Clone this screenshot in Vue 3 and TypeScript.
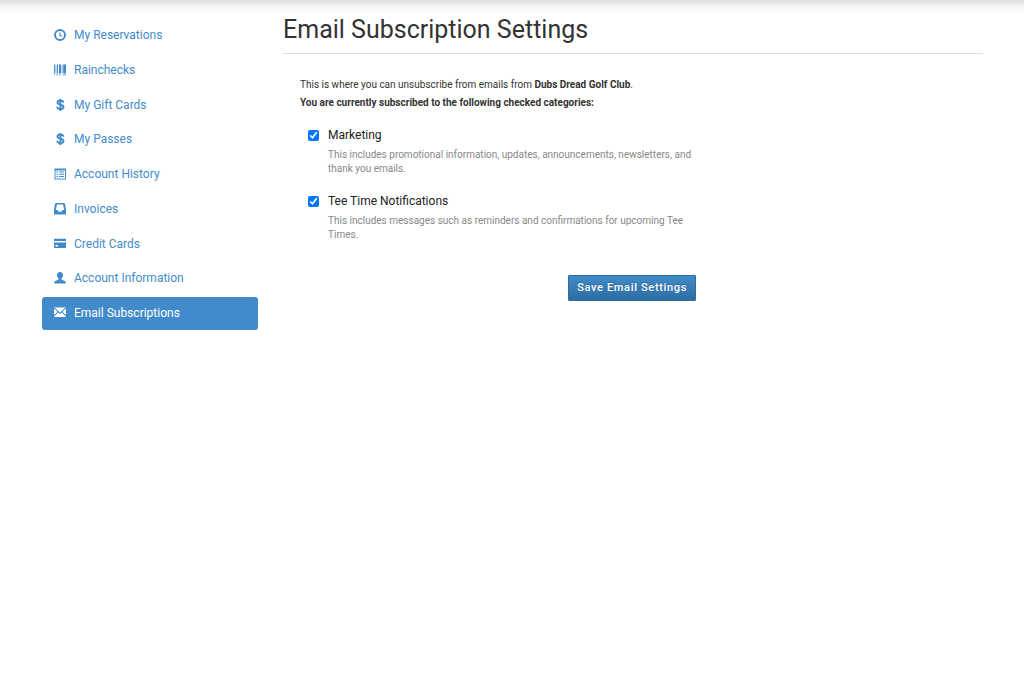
<script setup lang="ts">
import { ref } from 'vue'

type IconName = 'time' | 'barcode' | 'usd' | 'list' | 'inbox' | 'card' | 'user' | 'envelope'

interface NavItem {
  label: string
  icon: IconName
}

interface Category {
  id: string
  label: string
  description: string
  checked: boolean
}

const navItems: NavItem[] = [
  { label: 'My Reservations', icon: 'time' },
  { label: 'Rainchecks', icon: 'barcode' },
  { label: 'My Gift Cards', icon: 'usd' },
  { label: 'My Passes', icon: 'usd' },
  { label: 'Account History', icon: 'list' },
  { label: 'Invoices', icon: 'inbox' },
  { label: 'Credit Cards', icon: 'card' },
  { label: 'Account Information', icon: 'user' },
  { label: 'Email Subscriptions', icon: 'envelope' },
]

const active = ref('Email Subscriptions')

const categories = ref<Category[]>([
  {
    id: 'marketing',
    label: 'Marketing',
    description:
      'This includes promotional information, updates, announcements, newsletters, and thank you emails.',
    checked: true,
  },
  {
    id: 'tee-times',
    label: 'Tee Time Notifications',
    description: 'This includes messages such as reminders and confirmations for upcoming Tee Times.',
    checked: true,
  },
])
</script>

<template>
  <div class="page">
    <div class="top-shade"></div>
    <nav class="side" aria-label="Account">
      <ul class="nav-list">
        <li v-for="item in navItems" :key="item.label">
          <a
            href="#"
            class="nav-link"
            :class="{ active: item.label === active }"
            @click.prevent="active = item.label"
          >
            <svg class="icon" viewBox="0 0 12 12" aria-hidden="true">
              <g v-if="item.icon === 'time'" fill="none" stroke="currentColor">
                <circle cx="6" cy="6" r="5" stroke-width="1.9" />
                <path d="M5.9 3.3V6.3L8.1 7.2" stroke-width="1.1" />
              </g>
              <path
                v-else-if="item.icon === 'barcode'"
                d="M0 .5h.9v9H0zM1.6 .5h.7v9h-.7zM3 .5h1v9H3zM5 .5h2v9H5zM7.7 .5h.7v9h-.7zM9.2 .5H12v9H9.2zM0 10.5h1v.7H0zM2 10.5h2v.7H2zM5 10.5h2v.7H5zM9 10.5h3v.7H9z"
              />
              <path
                v-else-if="item.icon === 'usd'"
                d="M9.4 3.7C9.2 2.300 8.100 1.500 6.400 1.500C4.600 1.500 3.500 2.300 3.500 3.600C3.500 5 4.700 5.400 6.400 5.750C8.200 6.100 9.500 6.600 9.500 8.100C9.500 9.400 8.300 10.200 6.400 10.200C4.500 10.200 3.300 9.300 3.200 7.800M6.400 0V12"
                fill="none"
                stroke="currentColor"
                stroke-width="1.9"
              />
              <path
                v-else-if="item.icon === 'list'"
                fill-rule="evenodd"
                d="M.5 .5h11.500v11H.5zM1.500 2.500v8h9.500v-8zM2.500 3.500H4v1H2.500zM5 3.500h5v1H5zM2.500 5.800H4v1H2.500zM5 5.800h5v1H5zM2.500 8.100H4v1H2.500zM5 8.100h5v1H5z"
              />
              <path
                v-else-if="item.icon === 'inbox'"
                fill-rule="evenodd"
                d="M2 0h8q.7 0 .9.700L12 6.500v4.500q0 .5-.5.500H.5Q0 11.500 0 11V6.500L1.100 .7Q1.300 0 2 0zM2.900 1.500L1.900 6.900h1.700l1 1.800h2.800l1-1.800H10.100L9.100 1.500z"
              />
              <path
                v-else-if="item.icon === 'card'"
                fill-rule="evenodd"
                d="M.5 .8h11q.5 0 .5.500V3H0V1.300Q0 .8 .5 .8zM0 4.500h12v5q0 .5-.5.500H.5Q0 10 0 9.500zM1.500 7v1.500H4V7z"
              />
              <path
                v-else-if="item.icon === 'user'"
                d="M6 0C7.900 0 9 1.300 9 3.200C9 4.600 8.300 5.600 7.500 6.300V7.600L11 9.200Q12 9.700 12 11.500H0Q0 9.700 1 9.200L4.500 7.600V6.300C3.700 5.600 3 4.600 3 3.200C3 1.300 4.100 0 6 0z"
              />
              <path
                v-else
                d="M.3 .5h11.400L6 5.600zM0 1.500L3.500 4.800L0 8.300zM12 1.500L8.500 4.800L12 8.300zM4.200 5.400L6 7L7.800 5.400L12 9.700V10H0V9.700z"
              />
            </svg>
            <span>{{ item.label }}</span>
          </a>
        </li>
      </ul>
    </nav>

    <main class="content">
      <h1 class="title">Email Subscription Settings</h1>
      <form class="form" @submit.prevent>
        <p class="intro">
          This is where you can unsubscribe from emails from <b>Dubs Dread Golf Club</b>.<br />
          <b>You are currently subscribed to the following checked categories:</b>
        </p>
        <div v-for="c in categories" :key="c.id" class="category">
          <input :id="c.id" v-model="c.checked" class="check" type="checkbox" :aria-describedby="c.id + '-text'" />
          <div>
            <label class="label" :for="c.id">{{ c.label }}</label>
            <p :id="c.id + '-text'" class="description">{{ c.description }}</p>
          </div>
        </div>
        <button class="save" type="submit">Save Email Settings</button>
      </form>
    </main>
  </div>
</template>

<style>
body {
  margin: 0;
  background: #fff;
}
</style>

<style scoped>
.page {
  position: relative;
  display: grid;
  grid-template-columns: 216fr 700fr;
  column-gap: 25px;
  align-items: start;
  padding: 0 41px 0 42px;
  font-family: Roboto, "Liberation Sans", sans-serif;
  font-size: 12px;
  color: #333;
}

.top-shade {
  position: absolute;
  inset: 0 0 auto;
  height: 14px;
  background: linear-gradient(#dedede, #f3f3f3 45%, #fff);
}

.side {
  padding-top: 19px;
}

.nav-list {
  display: flex;
  flex-direction: column;
  justify-content: space-between;
  min-height: 311px;
  margin: 0;
  padding: 0;
  list-style: none;
}

.nav-link {
  display: flex;
  align-items: flex-start;
  gap: 8px;
  padding: 8px 12px;
  border-radius: 3px;
  font-size: 12px;
  line-height: 17px;
  color: #428bca;
  text-decoration: none;
}

.nav-link.active {
  background: #428bca;
  color: #fff;
}

.icon {
  flex: none;
  width: 12px;
  height: 12px;
  margin-top: 2px;
  fill: currentColor;
}

.content {
  position: relative;
}

.title {
  margin: 0;
  padding: 12px 0 6px;
  border-bottom: 1px solid #ddd;
  font-size: 25px;
  font-weight: 400;
  line-height: 35px;
}

.form {
  display: flex;
  flex-direction: column;
  max-width: 396px;
  padding: 22px 17px;
}

.intro {
  margin: 0 0 14px;
  font-size: 10px;
  line-height: 18px;
}

.intro b {
  font-weight: 700;
}

.category {
  display: flex;
  align-items: flex-start;
  gap: 9px;
  margin-bottom: 16px;
  padding-left: 8px;
}

.check {
  flex: none;
  width: 11px;
  height: 11px;
  margin: 4px 0 0;
  accent-color: #0075ff;
}

.label {
  display: block;
  font-size: 12px;
  line-height: 18px;
  color: #222;
}

.description {
  margin: 4px 0 0;
  font-size: 10px;
  line-height: 14px;
  color: #888;
}

.save {
  align-self: flex-end;
  margin-top: 17px;
  padding: 0 8px;
  border: 1px solid #2d6ca2;
  border-radius: 1px;
  background: linear-gradient(#428bca, #2d6ca2);
  font-family: inherit;
  font-size: 11px;
  font-weight: 500;
  line-height: 24px;
  letter-spacing: 0.06em;
  color: #fff;
  text-shadow: 0 -1px 0 rgba(0, 0, 0, 0.2);
}
</style>
